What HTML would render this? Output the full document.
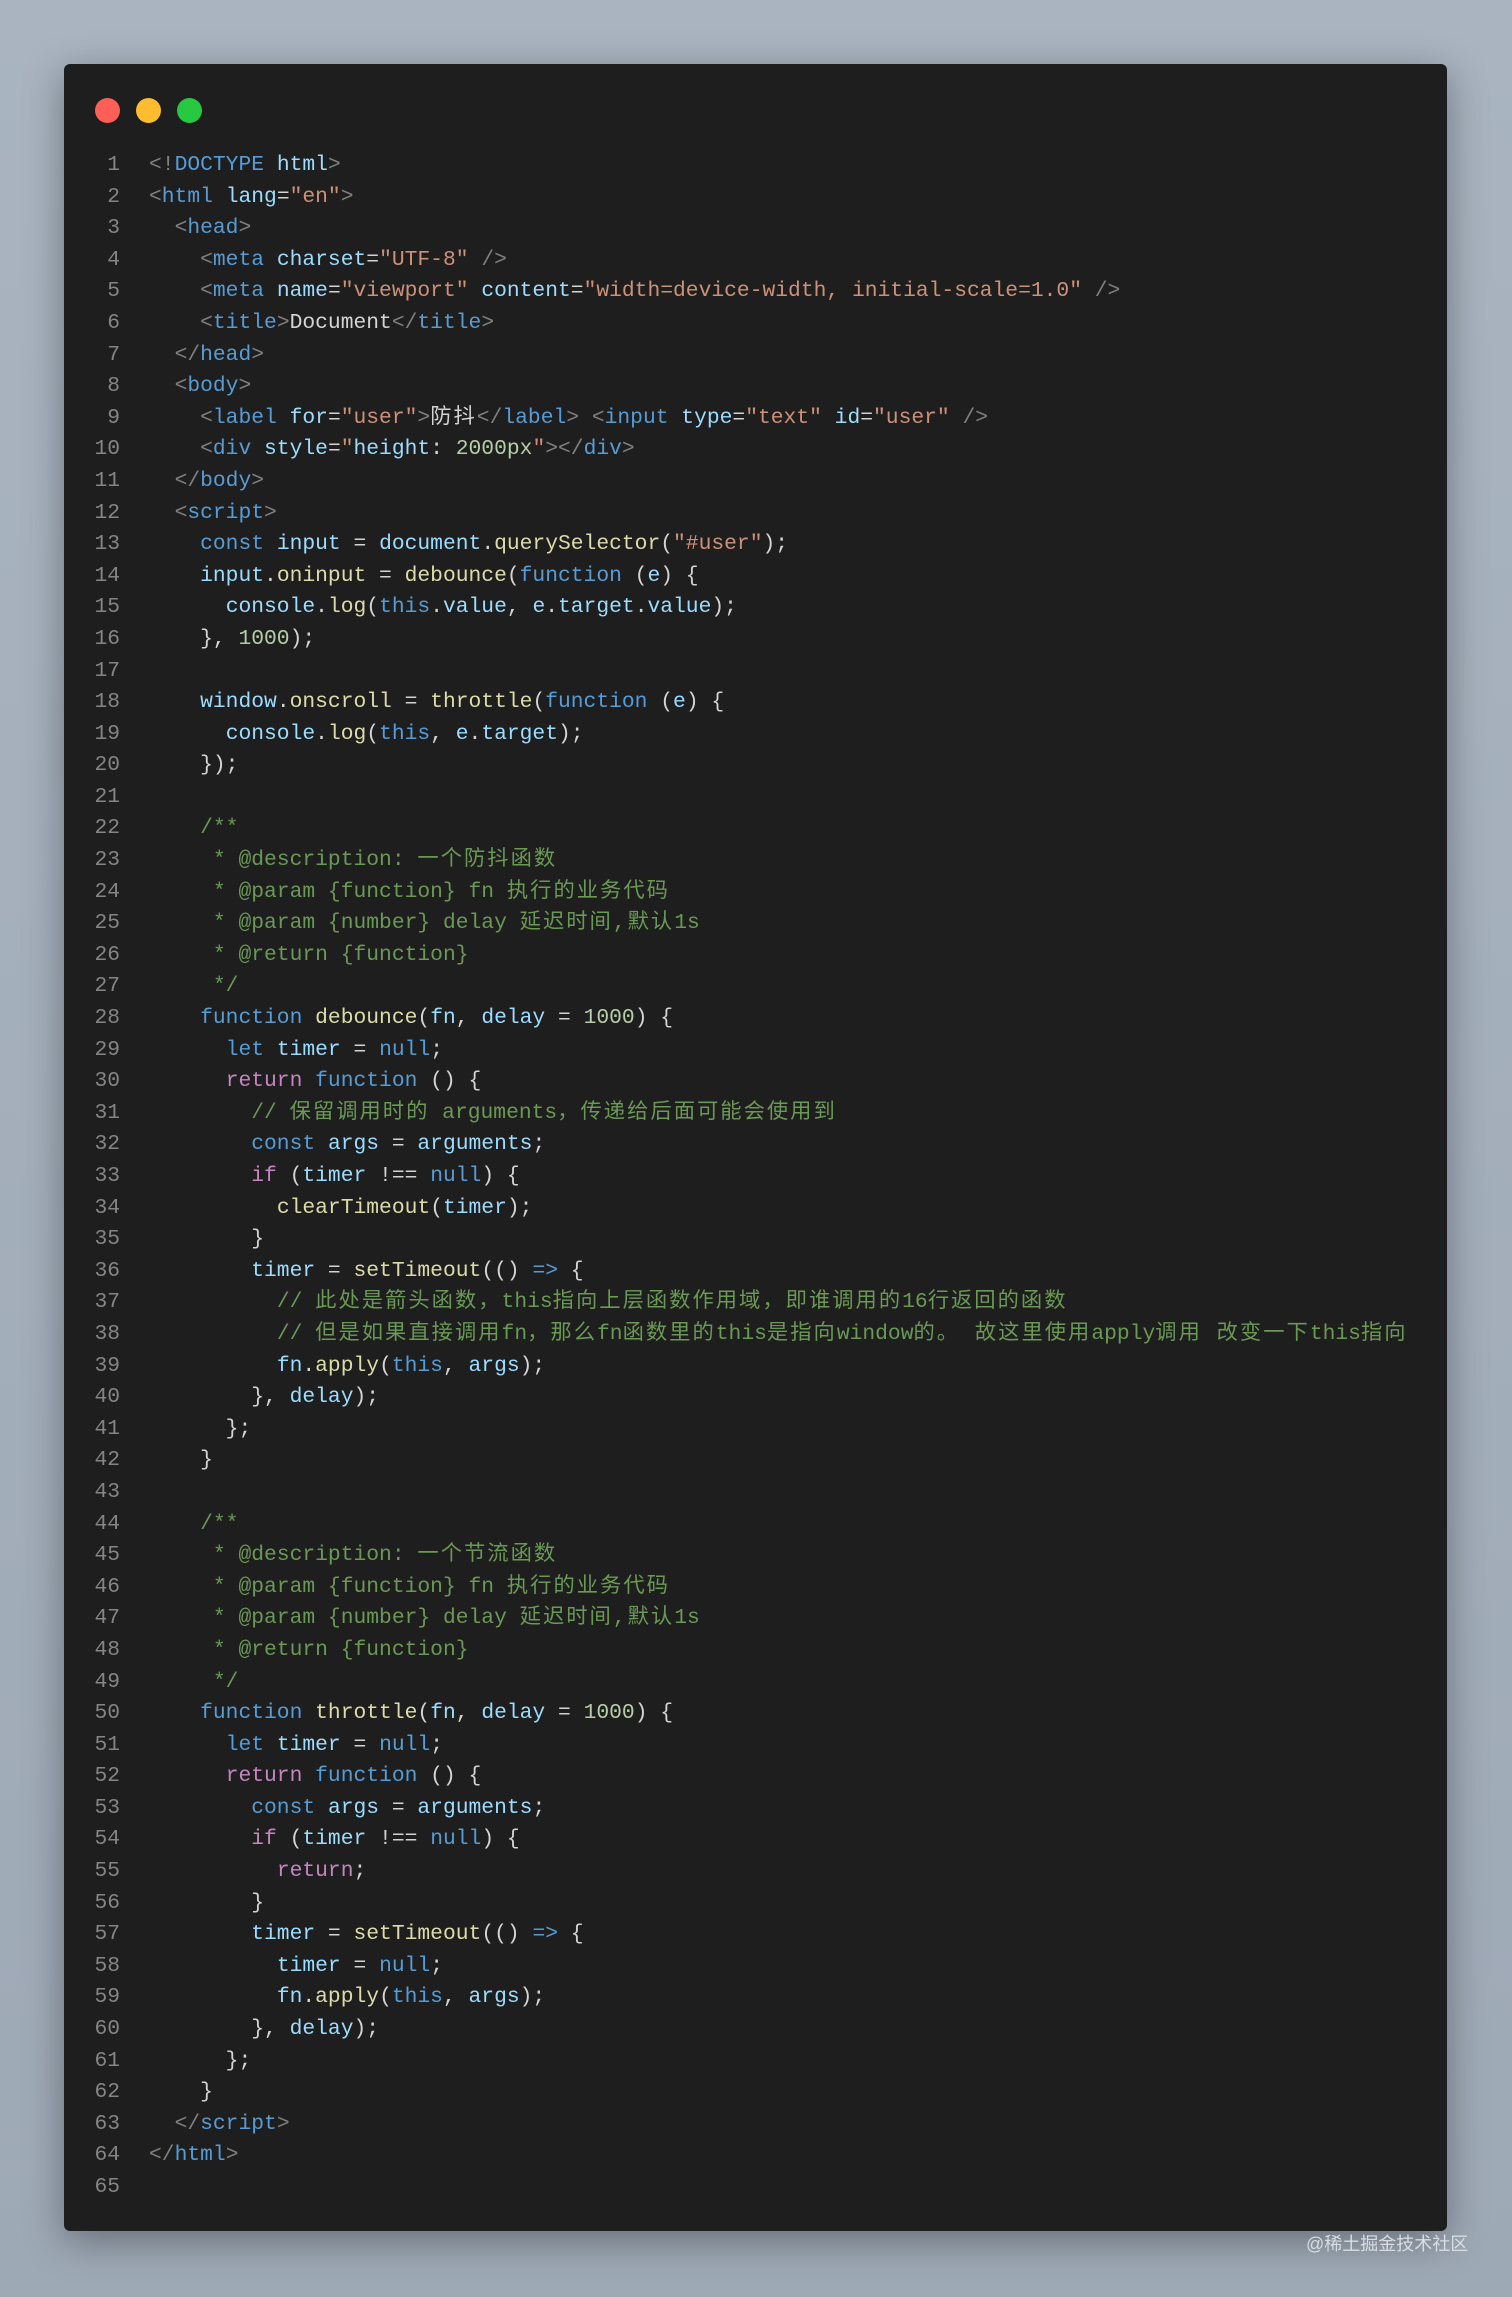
<!DOCTYPE html>
<html><head><meta charset="utf-8"><style>
html,body{margin:0;padding:0}
body{width:1512px;height:2297px;background:linear-gradient(180deg,#a9b4c0,#9ea9b6);position:relative;overflow:hidden;font-family:"Liberation Mono","Noto Sans CJK SC",monospace}
.win{position:absolute;left:64px;top:64px;width:1383px;height:2167px;background:#1e1e1e;border-radius:6px;box-shadow:0 10px 40px rgba(0,0,0,.35)}
.dot{position:absolute;top:34px;width:25px;height:25px;border-radius:50%}
pre{margin:0;position:absolute;top:150px;font-size:21.3px;line-height:31.6px;font-family:"Liberation Mono","Noto Sans CJK SC",monospace;color:#d4d4d4}
.ln{left:90px;width:30px;text-align:right;color:#858585}
.code{left:149px}
.p{color:#808080}.t{color:#569cd6}.a{color:#9cdcfe}.s{color:#ce9178}.c{color:#6a9955}.k{color:#569cd6}.r{color:#c586c0}.f{color:#dcdcaa}.v{color:#9cdcfe}.n{color:#b5cea8}
.z{letter-spacing:2px}
.wm{position:absolute;left:1306px;top:2230px;font-family:"Liberation Sans","Noto Sans CJK SC",sans-serif;font-size:18px;color:#d8dde3}
</style></head><body>
<div class="win">
<div class="dot" style="left:31px;background:#fe5f57"></div>
<div class="dot" style="left:72px;background:#febc2e"></div>
<div class="dot" style="left:113px;background:#28c840"></div>
</div>
<pre class="ln">1
2
3
4
5
6
7
8
9
10
11
12
13
14
15
16
17
18
19
20
21
22
23
24
25
26
27
28
29
30
31
32
33
34
35
36
37
38
39
40
41
42
43
44
45
46
47
48
49
50
51
52
53
54
55
56
57
58
59
60
61
62
63
64
65</pre>
<pre class="code"><span class="p">&lt;!</span><span class="t">DOCTYPE</span> <span class="a">html</span><span class="p">&gt;</span>
<span class="p">&lt;</span><span class="t">html</span> <span class="a">lang</span>=<span class="s">"en"</span><span class="p">&gt;</span>
  <span class="p">&lt;</span><span class="t">head</span><span class="p">&gt;</span>
    <span class="p">&lt;</span><span class="t">meta</span> <span class="a">charset</span>=<span class="s">"UTF-8"</span> <span class="p">/&gt;</span>
    <span class="p">&lt;</span><span class="t">meta</span> <span class="a">name</span>=<span class="s">"viewport"</span> <span class="a">content</span>=<span class="s">"width=device-width, initial-scale=1.0"</span> <span class="p">/&gt;</span>
    <span class="p">&lt;</span><span class="t">title</span><span class="p">&gt;</span>Document<span class="p">&lt;/</span><span class="t">title</span><span class="p">&gt;</span>
  <span class="p">&lt;/</span><span class="t">head</span><span class="p">&gt;</span>
  <span class="p">&lt;</span><span class="t">body</span><span class="p">&gt;</span>
    <span class="p">&lt;</span><span class="t">label</span> <span class="a">for</span>=<span class="s">"user"</span><span class="p">&gt;</span><span class="z">防抖</span><span class="p">&lt;/</span><span class="t">label</span><span class="p">&gt;</span> <span class="p">&lt;</span><span class="t">input</span> <span class="a">type</span>=<span class="s">"text"</span> <span class="a">id</span>=<span class="s">"user"</span> <span class="p">/&gt;</span>
    <span class="p">&lt;</span><span class="t">div</span> <span class="a">style</span>=<span class="s">"</span><span class="a">height</span>: <span class="n">2000px</span><span class="s">"</span><span class="p">&gt;&lt;/</span><span class="t">div</span><span class="p">&gt;</span>
  <span class="p">&lt;/</span><span class="t">body</span><span class="p">&gt;</span>
  <span class="p">&lt;</span><span class="t">script</span><span class="p">&gt;</span>
    <span class="k">const</span> <span class="v">input</span> = <span class="v">document</span>.<span class="f">querySelector</span>(<span class="s">"#user"</span>);
    <span class="v">input</span>.<span class="f">oninput</span> = <span class="f">debounce</span>(<span class="k">function</span> (<span class="v">e</span>) {
      <span class="v">console</span>.<span class="f">log</span>(<span class="k">this</span>.<span class="v">value</span>, <span class="v">e</span>.<span class="v">target</span>.<span class="v">value</span>);
    }, <span class="n">1000</span>);

    <span class="v">window</span>.<span class="f">onscroll</span> = <span class="f">throttle</span>(<span class="k">function</span> (<span class="v">e</span>) {
      <span class="v">console</span>.<span class="f">log</span>(<span class="k">this</span>, <span class="v">e</span>.<span class="v">target</span>);
    });

<span class="c">    /**
     * @description: <span class="z">一个防抖函数</span>
     * @param {function} fn <span class="z">执行的业务代码</span>
     * @param {number} delay <span class="z">延迟时间,默认</span>1s
     * @return {function}
     */</span>
    <span class="k">function</span> <span class="f">debounce</span>(<span class="v">fn</span>, <span class="v">delay</span> = <span class="n">1000</span>) {
      <span class="k">let</span> <span class="v">timer</span> = <span class="k">null</span>;
      <span class="r">return</span> <span class="k">function</span> () {
        <span class="c">// <span class="z">保留调用时的</span> arguments<span class="z">，传递给后面可能会使用到</span></span>
        <span class="k">const</span> <span class="v">args</span> = <span class="v">arguments</span>;
        <span class="r">if</span> (<span class="v">timer</span> !== <span class="k">null</span>) {
          <span class="f">clearTimeout</span>(<span class="v">timer</span>);
        }
        <span class="v">timer</span> = <span class="f">setTimeout</span>(() <span class="k">=&gt;</span> {
          <span class="c">// <span class="z">此处是箭头函数，</span>this<span class="z">指向上层函数作用域，即谁调用的</span>16<span class="z">行返回的函数</span></span>
          <span class="c">// <span class="z">但是如果直接调用</span>fn<span class="z">，那么</span>fn<span class="z">函数里的</span>this<span class="z">是指向</span>window<span class="z">的。 故这里使用</span>apply<span class="z">调用 改变一下</span>this<span class="z">指向</span></span>
          <span class="v">fn</span>.<span class="f">apply</span>(<span class="k">this</span>, <span class="v">args</span>);
        }, <span class="v">delay</span>);
      };
    }

<span class="c">    /**
     * @description: <span class="z">一个节流函数</span>
     * @param {function} fn <span class="z">执行的业务代码</span>
     * @param {number} delay <span class="z">延迟时间,默认</span>1s
     * @return {function}
     */</span>
    <span class="k">function</span> <span class="f">throttle</span>(<span class="v">fn</span>, <span class="v">delay</span> = <span class="n">1000</span>) {
      <span class="k">let</span> <span class="v">timer</span> = <span class="k">null</span>;
      <span class="r">return</span> <span class="k">function</span> () {
        <span class="k">const</span> <span class="v">args</span> = <span class="v">arguments</span>;
        <span class="r">if</span> (<span class="v">timer</span> !== <span class="k">null</span>) {
          <span class="r">return</span>;
        }
        <span class="v">timer</span> = <span class="f">setTimeout</span>(() <span class="k">=&gt;</span> {
          <span class="v">timer</span> = <span class="k">null</span>;
          <span class="v">fn</span>.<span class="f">apply</span>(<span class="k">this</span>, <span class="v">args</span>);
        }, <span class="v">delay</span>);
      };
    }
  <span class="p">&lt;/</span><span class="t">script</span><span class="p">&gt;</span>
<span class="p">&lt;/</span><span class="t">html</span><span class="p">&gt;</span>
</pre>
<div class="wm">@稀土掘金技术社区</div>
</body></html>
